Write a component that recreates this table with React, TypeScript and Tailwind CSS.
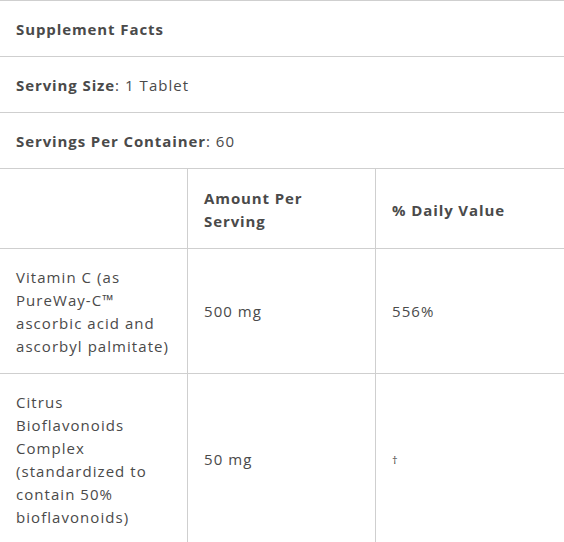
import React from "react";

const font = { fontFamily: '"Open Sans", "Noto Sans", sans-serif' };

export default function App() {
  return (
    <div className="w-[564px] h-[542px] overflow-hidden bg-white text-[#4a4a4a] text-[15px] leading-[23px] tracking-[1.05px]" style={font}>
      <div className="border-t border-[#cfcfcf]">
        <div className="border-b border-[#cfcfcf] px-4 pt-[17px] pb-[15px] font-bold tracking-[0.9px]">Supplement Facts</div>
        <div className="border-b border-[#cfcfcf] px-4 pt-[17px] pb-[15px]">
          <span className="font-bold tracking-[0.9px]">Serving Size</span>: 1 Tablet
        </div>
        <div className="border-b border-[#cfcfcf] px-4 pt-[17px] pb-[15px]">
          <span className="font-bold tracking-[0.9px]">Servings Per Container</span>: 60
        </div>
        <div className="grid grid-cols-[188px_188px_1fr] border-b border-[#cfcfcf]">
          <div className="border-r border-[#cfcfcf]"></div>
          <div className="border-r border-[#cfcfcf] px-4 pt-[18px] pb-[15px] font-bold tracking-[0.9px]">Amount Per<br />Serving</div>
          <div className="flex items-center px-4 pt-[18px] pb-[15px] font-bold tracking-[0.9px]">% Daily Value</div>
        </div>
        <div className="grid grid-cols-[188px_188px_1fr] border-b border-[#cfcfcf]">
          <div className="border-r border-[#cfcfcf] px-4 pt-[17px] pb-[15px]">
            Vitamin C (as<br />PureWay-C™<br />ascorbic acid and<br />ascorbyl palmitate)
          </div>
          <div className="border-r border-[#cfcfcf] flex items-center px-4">500 mg</div>
          <div className="flex items-center px-4">556%</div>
        </div>
        <div className="grid grid-cols-[188px_188px_1fr]">
          <div className="border-r border-[#cfcfcf] px-4 pt-[17px] pb-[15px]">
            Citrus<br />Bioflavonoids<br />Complex<br />(standardized to<br />contain 50%<br />bioflavonoids)
          </div>
          <div className="border-r border-[#cfcfcf] flex items-center px-4">50 mg</div>
          <div className="flex items-center px-4 text-[11px] text-[#444]">†</div>
        </div>
      </div>
    </div>
  );
}
